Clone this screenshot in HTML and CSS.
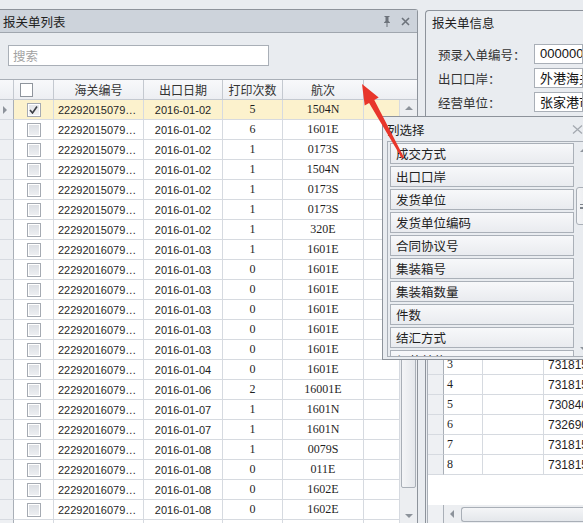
FILE: index.html
```html
<!DOCTYPE html>
<html lang="zh-CN">
<head>
    <meta charset="UTF-8">
    <title>报关单</title>
    <link rel="stylesheet" href="styles.css">
</head>
<body>
<div class="workspace">
    <section class="list-panel">
        <div class="panel-title">
            <span>报关单列表</span>
            <span class="title-tools">
                <svg width="8" height="11" viewBox="0 0 8 11"><path d="M1.5 0h5v1H5.5v4L7 6.5V7H1v-.5L2.5 5V1h-1z" fill="#6d737b"/><rect x="3.5" y="7" width="1" height="4" fill="#6d737b"/></svg>
                <svg width="9" height="9" viewBox="0 0 9 9"><path d="M1 1l7 7M8 1L1 8" stroke="#6d737b" stroke-width="1.6"/></svg>
            </span>
        </div>
        <div class="search-row"><input class="search" type="text" placeholder="搜索"></div>

        <div class="grid">
            <div class="grid-row grid-head">
                <div class="cell ind"></div>
                <div class="cell chk"><span class="box box-head"></span></div>
                <div class="cell">海关编号</div>
                <div class="cell">出口日期</div>
                <div class="cell">打印次数</div>
                <div class="cell">航次</div>
                <div class="cell"></div>
                <div class="cell last"></div>
            </div>
            <div class="grid-main">
                <div class="grid-body">
                    <div class="grid-row selected"><div class="cell ind mark"></div><div class="cell chk"><span class="box checked"><svg width="9" height="8" viewBox="0 0 9 8"><path d="M1 4l2.5 3L8 0.5" fill="none" stroke="#3c3f44" stroke-width="1.6"/></svg></span></div><div class="cell no">22292015079…</div><div class="cell date">2016-01-02</div><div class="cell num">5</div><div class="cell num">1504N</div><div class="cell"></div></div>
                    <div class="grid-row"><div class="cell ind"></div><div class="cell chk"><span class="box"></span></div><div class="cell no">22292015079…</div><div class="cell date">2016-01-02</div><div class="cell num">6</div><div class="cell num">1601E</div><div class="cell"></div></div>
                    <div class="grid-row"><div class="cell ind"></div><div class="cell chk"><span class="box"></span></div><div class="cell no">22292015079…</div><div class="cell date">2016-01-02</div><div class="cell num">1</div><div class="cell num">0173S</div><div class="cell"></div></div>
                    <div class="grid-row"><div class="cell ind"></div><div class="cell chk"><span class="box"></span></div><div class="cell no">22292015079…</div><div class="cell date">2016-01-02</div><div class="cell num">1</div><div class="cell num">1504N</div><div class="cell"></div></div>
                    <div class="grid-row"><div class="cell ind"></div><div class="cell chk"><span class="box"></span></div><div class="cell no">22292015079…</div><div class="cell date">2016-01-02</div><div class="cell num">1</div><div class="cell num">0173S</div><div class="cell"></div></div>
                    <div class="grid-row"><div class="cell ind"></div><div class="cell chk"><span class="box"></span></div><div class="cell no">22292015079…</div><div class="cell date">2016-01-02</div><div class="cell num">1</div><div class="cell num">0173S</div><div class="cell"></div></div>
                    <div class="grid-row"><div class="cell ind"></div><div class="cell chk"><span class="box"></span></div><div class="cell no">22292015079…</div><div class="cell date">2016-01-02</div><div class="cell num">1</div><div class="cell num">320E</div><div class="cell"></div></div>
                    <div class="grid-row"><div class="cell ind"></div><div class="cell chk"><span class="box"></span></div><div class="cell no">22292016079…</div><div class="cell date">2016-01-03</div><div class="cell num">1</div><div class="cell num">1601E</div><div class="cell"></div></div>
                    <div class="grid-row"><div class="cell ind"></div><div class="cell chk"><span class="box"></span></div><div class="cell no">22292016079…</div><div class="cell date">2016-01-03</div><div class="cell num">0</div><div class="cell num">1601E</div><div class="cell"></div></div>
                    <div class="grid-row"><div class="cell ind"></div><div class="cell chk"><span class="box"></span></div><div class="cell no">22292016079…</div><div class="cell date">2016-01-03</div><div class="cell num">0</div><div class="cell num">1601E</div><div class="cell"></div></div>
                    <div class="grid-row"><div class="cell ind"></div><div class="cell chk"><span class="box"></span></div><div class="cell no">22292016079…</div><div class="cell date">2016-01-03</div><div class="cell num">0</div><div class="cell num">1601E</div><div class="cell"></div></div>
                    <div class="grid-row"><div class="cell ind"></div><div class="cell chk"><span class="box"></span></div><div class="cell no">22292016079…</div><div class="cell date">2016-01-03</div><div class="cell num">0</div><div class="cell num">1601E</div><div class="cell"></div></div>
                    <div class="grid-row"><div class="cell ind"></div><div class="cell chk"><span class="box"></span></div><div class="cell no">22292016079…</div><div class="cell date">2016-01-03</div><div class="cell num">0</div><div class="cell num">1601E</div><div class="cell"></div></div>
                    <div class="grid-row"><div class="cell ind"></div><div class="cell chk"><span class="box"></span></div><div class="cell no">22292016079…</div><div class="cell date">2016-01-04</div><div class="cell num">0</div><div class="cell num">1601E</div><div class="cell"></div></div>
                    <div class="grid-row"><div class="cell ind"></div><div class="cell chk"><span class="box"></span></div><div class="cell no">22292016079…</div><div class="cell date">2016-01-06</div><div class="cell num">2</div><div class="cell num">16001E</div><div class="cell"></div></div>
                    <div class="grid-row"><div class="cell ind"></div><div class="cell chk"><span class="box"></span></div><div class="cell no">22292016079…</div><div class="cell date">2016-01-07</div><div class="cell num">1</div><div class="cell num">1601N</div><div class="cell"></div></div>
                    <div class="grid-row"><div class="cell ind"></div><div class="cell chk"><span class="box"></span></div><div class="cell no">22292016079…</div><div class="cell date">2016-01-07</div><div class="cell num">1</div><div class="cell num">1601N</div><div class="cell"></div></div>
                    <div class="grid-row"><div class="cell ind"></div><div class="cell chk"><span class="box"></span></div><div class="cell no">22292016079…</div><div class="cell date">2016-01-08</div><div class="cell num">1</div><div class="cell num">0079S</div><div class="cell"></div></div>
                    <div class="grid-row"><div class="cell ind"></div><div class="cell chk"><span class="box"></span></div><div class="cell no">22292016079…</div><div class="cell date">2016-01-08</div><div class="cell num">0</div><div class="cell num">011E</div><div class="cell"></div></div>
                    <div class="grid-row"><div class="cell ind"></div><div class="cell chk"><span class="box"></span></div><div class="cell no">22292016079…</div><div class="cell date">2016-01-08</div><div class="cell num">0</div><div class="cell num">1602E</div><div class="cell"></div></div>
                    <div class="grid-row"><div class="cell ind"></div><div class="cell chk"><span class="box"></span></div><div class="cell no">22292016079…</div><div class="cell date">2016-01-08</div><div class="cell num">0</div><div class="cell num">1602E</div><div class="cell"></div></div>
                    <div class="grid-row"><div class="cell ind"></div><div class="cell chk"><span class="box"></span></div><div class="cell no"></div><div class="cell date"></div><div class="cell num"></div><div class="cell num"></div><div class="cell"></div></div>
                </div>
                <div class="vscroll">
                    <span class="arrow-up"></span>
                    <div class="track"><div class="thumb"></div></div>
                    <span class="arrow-down"></span>
                </div>
            </div>
        </div>
    </section>

    <section class="info-panel">
        <div class="info-title">报关单信息</div>
        <div class="form-row"><label>预录入单编号：</label><div class="field digits">000000000000000000</div></div>
        <div class="form-row"><label>出口口岸：</label><div class="field">外港海关</div></div>
        <div class="form-row"><label>经营单位：</label><div class="field">张家港市进出口有限公司</div></div>

        <div class="goods">
            <div class="goods-row goods-head"><div class="cell ind"></div><div class="cell">项号</div><div class="cell">商品名称</div><div class="cell">商品编号</div></div>
            <div class="goods-row"><div class="cell ind"></div><div class="cell seq">1</div><div class="cell"></div><div class="cell code">731815</div></div>
            <div class="goods-row"><div class="cell ind"></div><div class="cell seq">2</div><div class="cell"></div><div class="cell code">731815</div></div>
            <div class="goods-row"><div class="cell ind"></div><div class="cell seq">3</div><div class="cell"></div><div class="cell code">731815</div></div>
            <div class="goods-row"><div class="cell ind"></div><div class="cell seq">4</div><div class="cell"></div><div class="cell code">731815</div></div>
            <div class="goods-row"><div class="cell ind"></div><div class="cell seq">5</div><div class="cell"></div><div class="cell code">730840</div></div>
            <div class="goods-row"><div class="cell ind"></div><div class="cell seq">6</div><div class="cell"></div><div class="cell code">732690</div></div>
            <div class="goods-row"><div class="cell ind"></div><div class="cell seq">7</div><div class="cell"></div><div class="cell code">731815</div></div>
            <div class="goods-row"><div class="cell ind"></div><div class="cell seq">8</div><div class="cell"></div><div class="cell code">731815</div></div>
            <div class="goods-fill"></div>
            <div class="hscroll">
                <div class="hs-corner"></div>
                <div class="hs-track"><span class="arrow-left"></span><div class="hs-thumb"></div></div>
            </div>
        </div>
    </section>
</div>

<div class="col-chooser">
    <div class="chooser-title">
        <span>列选择</span>
        <svg width="11" height="9" viewBox="0 0 11 9"><path d="M1 0.5l9 8M10 0.5l-9 8" stroke="#a4a9b0" stroke-width="1.3"/></svg>
    </div>
    <div class="chooser-list">
        <div class="items">
            <div class="item">成交方式</div>
            <div class="item">出口口岸</div>
            <div class="item">发货单位</div>
            <div class="item">发货单位编码</div>
            <div class="item">合同协议号</div>
            <div class="item">集装箱号</div>
            <div class="item">集装箱数量</div>
            <div class="item">件数</div>
            <div class="item">结汇方式</div>
            <div class="item">经营单位</div>
        </div>
        <div class="chooser-scroll">
            <span class="arrow-up"></span>
            <div class="track"><div class="thumb"><span class="grip"></span></div></div>
            <span class="arrow-down"></span>
        </div>
    </div>
</div>

<svg class="callout" width="55" height="85" viewBox="355 78 55 85">
    <polygon points="362,84 378.7,97.6 374.3,100 404,157.5 402,158.6 369.1,102.9 364.7,105.4" fill="#e8362b"/>
</svg>
</body>
</html>
```

FILE: styles.css
```css
* {
    box-sizing: border-box;
}
body {
    margin: 0;
    width: 583px;
    height: 523px;
    overflow: hidden;
    position: relative;
    background-color: #e9ecf0;
    color: #1f1f1f;
    font-family: "Noto Sans CJK SC", sans-serif;
    font-size: 12px;
}
.workspace {
    display: flex;
    height: 523px;
    padding-top: 9px;
}

/* left: list panel */
.list-panel {
    width: 418px;
    flex: none;
    display: flex;
    flex-direction: column;
    border-top: 1px solid #8d939b;
    border-right: 1px solid #8d939b;
    border-top-right-radius: 3px;
}
.panel-title {
    height: 23px;
    display: flex;
    align-items: center;
    justify-content: space-between;
    padding: 0 7px 0 3px;
    background-color: #cdd3db;
    border-bottom: 1px solid #a0a6ae;
    font-size: 12.5px;
    color: #222;
}
.title-tools {
    display: flex;
    align-items: center;
    gap: 10px;
}
.search-row {
    padding: 12px 0 13px 8px;
}
.search {
    display: block;
    width: 261px;
    height: 21px;
    border: 1px solid #a9afb7;
    background-color: #fff;
    padding: 0 0 0 4px;
    font-family: "Noto Sans CJK SC", sans-serif;
    font-size: 12.5px;
    outline: none;
}
.search::placeholder {
    color: #a2a2a2;
}

.grid {
    flex: 1;
    min-height: 0;
    display: flex;
    flex-direction: column;
    border-top: 1px solid #a9afb7;
    background-color: #fff;
}
.grid-row {
    display: grid;
    grid-template-columns: 14px 40px 90px 79px 60px 81px 35px;
    height: 20px;
}
.grid-head {
    grid-template-columns: 14px 40px 90px 79px 60px 81px 35px 18px;
    background: linear-gradient(#f8f9fb, #eceef2);
    color: #333;
}
.grid-head .cell {
    border-bottom-color: #c4c9d0;
    border-right-color: #c4c9d0;
}
.grid-head .ind {
    background: none;
}
.grid-main {
    flex: 1;
    min-height: 0;
    display: flex;
}
.grid-body {
    width: 399px;
    flex: none;
}
.cell {
    display: flex;
    align-items: center;
    justify-content: center;
    white-space: nowrap;
    overflow: hidden;
    border-right: 1px solid #d6dae0;
    border-bottom: 1px solid #d6dae0;
}
.grid-row .cell:nth-child(7) {
    border-right: none;
}
.cell.last {
    border-right: none;
}
.ind {
    background-color: #eef0f3;
    border-right-color: #a9afb7;
}
.mark::after {
    content: "";
    border-left: 4px solid #8d939b;
    border-top: 4px solid transparent;
    border-bottom: 4px solid transparent;
    margin-left: -4px;
}
.selected {
    background-color: #fcf2cd;
}
.chk .box {
    width: 14px;
    height: 14px;
    border: 1px solid #a5aab2;
    background: linear-gradient(#dadde2, #eef0f3);
    box-shadow: inset 0 0 0 1px #fff;
    display: flex;
    align-items: center;
    justify-content: center;
}
.grid-head .chk {
    justify-content: flex-start;
    padding-left: 6px;
}
.chk .box-head {
    width: 13px;
    height: 14px;
    background: #fff;
    border-color: #8f959d;
}
.chk .checked {
    background: linear-gradient(#e2e4e8, #f3f4f6);
}
.no {
    justify-content: flex-start;
    padding-left: 4px;
    font-family: "Liberation Sans", sans-serif;
    font-size: 11px;
}
.date {
    font-family: "Liberation Sans", sans-serif;
    font-size: 11px;
}
.num {
    font-family: "Liberation Serif", serif;
    font-size: 12px;
}

/* scrollbars */
.vscroll {
    width: 18px;
    display: flex;
    flex-direction: column;
    align-items: center;
    padding: 6px 0 5px;
    background-color: #eceef1;
    border-left: 1px solid #d6dae0;
}
.arrow-up {
    border-left: 4px solid transparent;
    border-right: 4px solid transparent;
    border-bottom: 4px solid #8d939b;
}
.arrow-down {
    border-left: 4px solid transparent;
    border-right: 4px solid transparent;
    border-top: 4px solid #8d939b;
}
.arrow-left {
    border-top: 4px solid transparent;
    border-bottom: 4px solid transparent;
    border-right: 4px solid #8d939b;
}
.track {
    flex: 1;
    width: 100%;
}
.vscroll .thumb {
    margin: 248px 1px 0;
    height: 130px;
    border: 1px solid #a9afb7;
    border-radius: 2px;
    background: linear-gradient(90deg, #f4f5f7, #e4e7eb);
}

/* right: info panel */
.info-panel {
    flex: 1;
    min-width: 0;
    margin: 1px 0 0 7px;
    display: flex;
    flex-direction: column;
    border-left: 1px solid #8d939b;
    border-top: 1px solid #8d939b;
    border-top-left-radius: 4px;
}
.info-title {
    height: 33px;
    padding: 3px 0 0 6px;
    line-height: 18px;
    font-size: 12.5px;
}
.form-row {
    display: flex;
    align-items: center;
    height: 20px;
    margin-bottom: 4px;
    padding-left: 12px;
    font-size: 12.5px;
    color: #333;
}
.form-row label {
    width: 96px;
    flex: none;
}
.field {
    flex: 1;
    height: 20px;
    border: 1px solid #a9afb7;
    background-color: #fff;
    padding-left: 5px;
    line-height: 18px;
    font-size: 13px;
    color: #111;
    white-space: nowrap;
    overflow: hidden;
}
.field.digits {
    font-family: "Liberation Sans", sans-serif;
}
.goods {
    flex: 1;
    display: flex;
    flex-direction: column;
    margin: 179px 0 0 1px;
    border-left: 1px solid #a9afb7;
    background-color: #fff;
}
.goods-row {
    display: grid;
    grid-template-columns: 16px 39px 61px 1fr;
    height: 20px;
}
.goods-head {
    background: linear-gradient(#f8f9fb, #eceef2);
}
.goods-row .cell:last-child {
    border-right: none;
}
.seq {
    justify-content: flex-start;
    padding-left: 3px;
    font-family: "Liberation Serif", serif;
    font-size: 12px;
}
.code {
    justify-content: flex-start;
    padding-left: 4px;
    font-family: "Liberation Sans", sans-serif;
    font-size: 12px;
}
.goods-fill {
    flex: 1;
}
.hscroll {
    height: 18px;
    display: flex;
}
.hs-corner {
    width: 16px;
    background-color: #eef0f3;
    border-right: 1px solid #a9afb7;
}
.hs-track {
    flex: 1;
    display: flex;
    align-items: center;
    padding-left: 6px;
    background-color: #eceef1;
}
.hs-thumb {
    flex: 1;
    height: 15px;
    margin-left: 7px;
    border: 1px solid #a9afb7;
    border-right: none;
    border-radius: 3px 0 0 3px;
    background: linear-gradient(#f4f5f7, #e4e7eb);
}

/* column chooser popup */
.col-chooser {
    position: absolute;
    left: 382px;
    top: 116px;
    width: 212px;
    height: 244px;
    z-index: 2;
    display: flex;
    flex-direction: column;
    border: 1px solid #8d939b;
    background-color: #e9ecf0;
}
.chooser-title {
    height: 24px;
    display: flex;
    align-items: center;
    justify-content: space-between;
    padding: 1px 0 0 4px;
    font-size: 12.5px;
    color: #222;
}
.chooser-title svg {
    margin-right: 10px;
}
.chooser-list {
    flex: 1;
    display: flex;
    margin: 0 0 2px 4px;
    border: 1px solid #a9afb7;
    border-right: none;
    overflow: hidden;
}
.items {
    width: 187px;
    flex: none;
    display: flex;
    flex-direction: column;
    gap: 2px;
    padding: 1px 1px 0 2px;
    overflow: hidden;
}
.item {
    height: 21px;
    flex: none;
    padding-left: 5px;
    line-height: 19px;
    font-size: 12.5px;
    color: #222;
    border: 1px solid #aab0b8;
    background: linear-gradient(#f7f8fa, #e9ebef);
}
.chooser-scroll {
    width: 17px;
    display: flex;
    flex-direction: column;
    align-items: center;
    padding: 6px 0 5px;
}
.chooser-scroll .thumb {
    margin: 35px 0 0 1px;
    height: 38px;
    border: 1px solid #a9afb7;
    border-radius: 3px;
    background: linear-gradient(90deg, #f4f5f7, #e4e7eb);
    display: flex;
    align-items: center;
    padding-left: 3px;
}
.grip {
    width: 5px;
    height: 5px;
    border-top: 1px solid #7d838b;
    border-bottom: 1px solid #7d838b;
    box-shadow: inset 0 -2px 0 -1px #7d838b;
}

.callout {
    position: absolute;
    left: 355px;
    top: 78px;
    z-index: 3;
}
```
